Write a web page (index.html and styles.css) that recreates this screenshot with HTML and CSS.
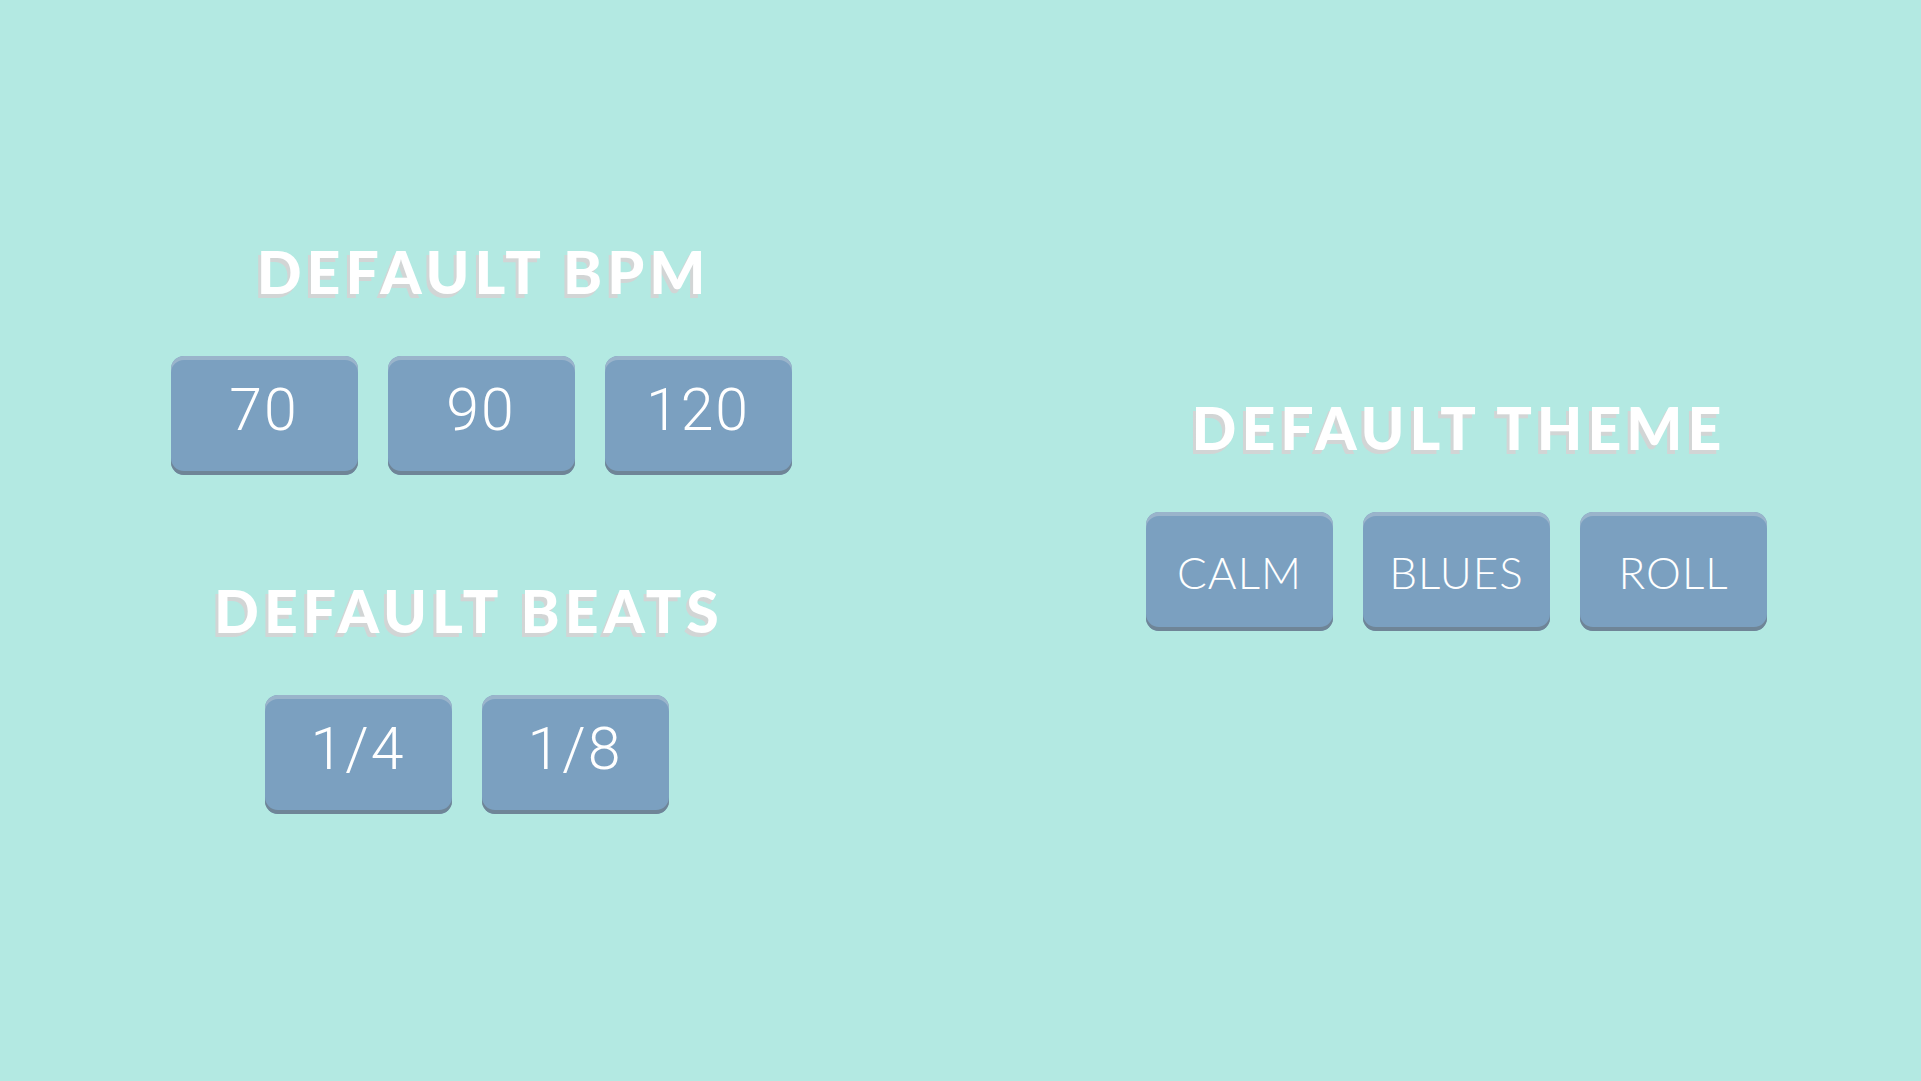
FILE: index.html
```html
<!DOCTYPE html>
<html lang="en">
<head>
<meta charset="utf-8">
<title>Settings</title>
<link rel="stylesheet" href="styles.css">
</head>
<body>
<main class="page">
  <section class="col col-left">
    <div class="group">
      <h2 class="title">DEFAULT BPM</h2>
      <div class="btn-row">
        <button class="btn btn-num">70</button>
        <button class="btn btn-num">90</button>
        <button class="btn btn-num">120</button>
      </div>
    </div>
    <div class="group group-next">
      <h2 class="title">DEFAULT BEATS</h2>
      <div class="btn-row">
        <button class="btn btn-num">1/4</button>
        <button class="btn btn-num">1/8</button>
      </div>
    </div>
  </section>
  <section class="col col-right">
    <div class="group">
      <h2 class="title">DEFAULT THEME</h2>
      <div class="btn-row">
        <button class="btn btn-word">CALM</button>
        <button class="btn btn-word">BLUES</button>
        <button class="btn btn-word">ROLL</button>
      </div>
    </div>
  </section>
</main>
</body>
</html>
```
FILE: styles.css
```css
html, body {
  margin: 0;
  padding: 0;
}
body {
  background: #b3e9e2;
  width: 1921px;
  height: 1081px;
  overflow: hidden;
}
.page {
  display: flex;
  height: 1081px;
}
.col {
  display: flex;
  flex-direction: column;
  align-items: center;
}
.col-left {
  width: 962px;
  padding-top: 242px;
  box-sizing: border-box;
}
.col-right {
  flex: 1;
  padding-left: 30px;
  padding-top: 398px;
}
.group {
  display: flex;
  flex-direction: column;
  align-items: center;
  gap: 54px;
}
.group-next {
  margin-top: 106px;
  margin-right: 29px;
}
.title {
  margin: 0;
  padding-left: 5px;
  font-family: "Lato", "DejaVu Sans", sans-serif;
  font-weight: 900;
  font-size: 59px;
  line-height: 60px;
  letter-spacing: 5px;
  color: #ffffff;
  text-shadow: -3px 4px 0 #d2d5d5;
  white-space: nowrap;
}
.btn-row {
  display: flex;
  gap: 30px;
}
.btn {
  width: 187px;
  height: 119px;
  border: 0;
  padding: 0;
  border-radius: 13px;
  background: #7ba0c0;
  box-shadow: inset 0 4px 0 #9ab4cb, inset 0 -4px 0 #6f8597;
  color: #ffffff;
  display: flex;
  align-items: center;
  justify-content: center;
  line-height: 1;
}
.btn-num {
  font-family: "Roboto", "DejaVu Sans", sans-serif;
  font-weight: 300;
  font-size: 59px;
  letter-spacing: 2px;
  padding-bottom: 13px;
}
.btn-word {
  font-family: "Lato", "DejaVu Sans", sans-serif;
  font-weight: 300;
  font-size: 44px;
  letter-spacing: 1px;
}
```
